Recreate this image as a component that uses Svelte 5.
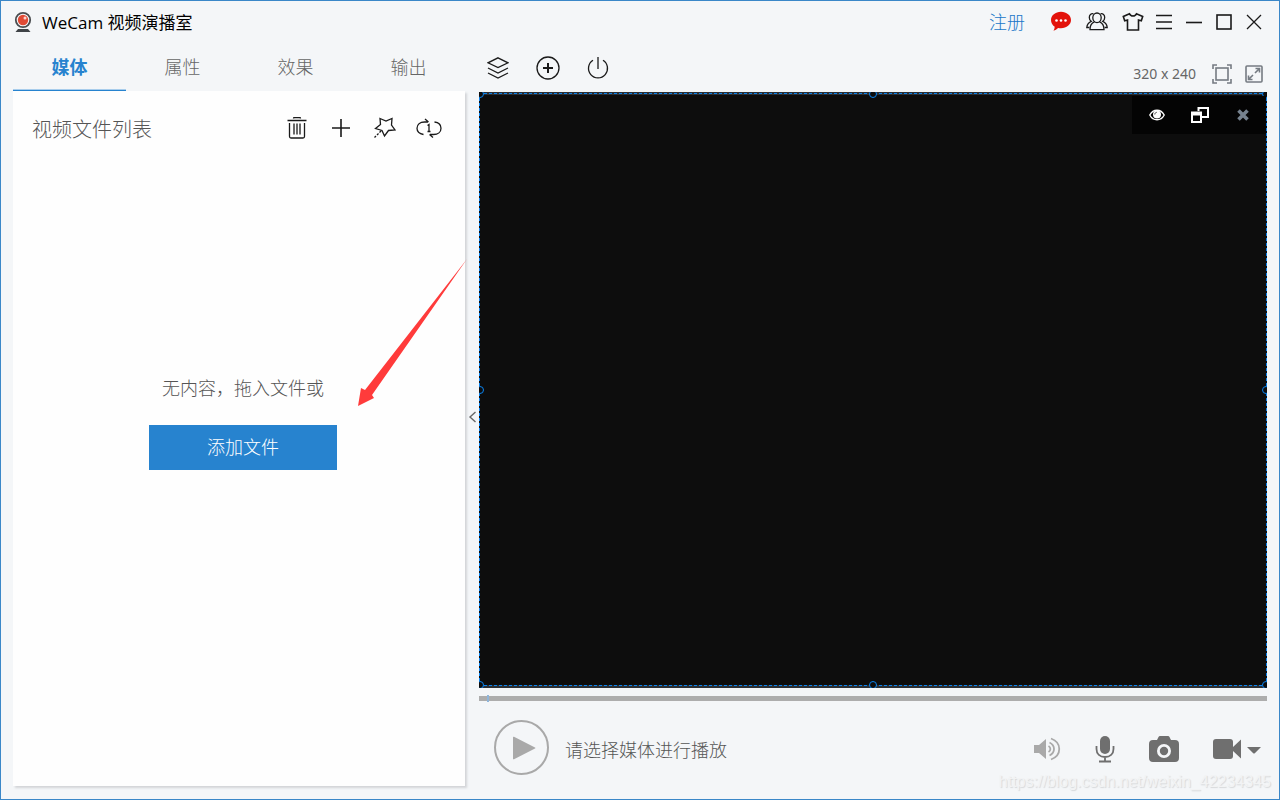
<script>
  let tabs = ['媒体', '属性', '效果', '输出'];
  let current = '媒体';
  let position = 0;

  // grips on the edges of the selected source, in percent
  const grips = [
    [0, 0], [50, 0], [100, 0],
    [0, 50], [100, 50],
    [0, 100], [50, 100], [100, 100]
  ];
</script>

<svelte:head>
  <title>WeCam 视频演播室</title>
</svelte:head>

<div class="window">
  <header>
    <svg class="logo" width="18" height="22" viewBox="0 0 18 22">
      <path d="M4 18h10l2.500 3h-15z" fill="#3f4347" />
      <circle cx="9" cy="9" r="7.200" fill="#f4f6f8" stroke="#4a4d50" stroke-width="1.800" />
      <circle cx="9" cy="9" r="5.200" fill="#e04a35" />
      <circle cx="11" cy="7" r="1.500" fill="#fbd5cf" />
    </svg>
    <h1>WeCam 视频演播室</h1>
    <a class="register" href="#register">注册</a>

    <div class="account">
      <button aria-label="消息">
        <svg width="22" height="22" viewBox="0 0 22 22">
          <path d="M11 .8c5.600 0 10 3.600 10 8.200s-4.400 8.200-10 8.200c-1 0-2-.1-2.900-.3-1.300 1.300-2.900 2.300-4.600 2.900.7-1.200 1.100-2.600 1.200-4.100C2.400 14.200 1 11.800 1 9c0-4.600 4.400-8.200 10-8.200z" fill="#e3120b" />
          <circle cx="6.500" cy="9.500" r="1.300" fill="#fff" />
          <circle cx="11" cy="9.500" r="1.300" fill="#fff" />
          <circle cx="15.500" cy="9.500" r="1.300" fill="#fff" />
        </svg>
      </button>
      <button aria-label="用户">
        <svg width="22" height="20" viewBox="0 0 22 20" class="line">
          <ellipse cx="11" cy="5.800" rx="4.200" ry="4.800" />
          <path d="M8.500 9.800c-2.900 1.100-4.500 3.800-4.500 7.800h14c0-4-1.600-6.700-4.500-7.800" />
          <path d="M7.500 1.800C5 1.300 3.300 3 3.300 5.500c0 1.700.7 3 1.900 3.800C2.600 10.400 1 12.600.8 15.500h2.500M14.500 1.800c2.500-.5 4.200 1.200 4.200 3.700 0 1.700-.7 3-1.900 3.800 2.600 1.100 4.200 3.300 4.400 6.200h-2.500" />
        </svg>
      </button>
      <button aria-label="皮肤">
        <svg width="22" height="20" viewBox="0 0 22 20" class="line bold">
          <path d="M7.500 1.700 1.300 4.500l1.400 4.200 2.800-.7v10h11V8l2.800.7 1.400-4.200-6.200-2.800c-.6 1.500-1.900 2.300-3.500 2.300s-2.900-.8-3.500-2.300z" />
        </svg>
      </button>
    </div>

    <div class="controls">
      <button aria-label="菜单">
        <svg width="16" height="16" viewBox="0 0 16 16" class="line bold">
          <path d="M0 1.500h16M0 8h16M0 14.500h16" />
        </svg>
      </button>
      <button aria-label="最小化">
        <svg width="16" height="16" viewBox="0 0 16 16" class="line bold"><path d="M0 8.500h16" /></svg>
      </button>
      <button aria-label="最大化">
        <svg width="16" height="16" viewBox="0 0 16 16" class="line bold"><rect x="1" y="1" width="14" height="14" /></svg>
      </button>
      <button aria-label="关闭">
        <svg width="16" height="16" viewBox="0 0 16 16" class="line"><path d="M1 1l14 14M15 1L1 15" /></svg>
      </button>
    </div>
  </header>

  <main>
    <section class="sidebar">
      <nav>
        {#each tabs as tab}
          <button class:active={tab === current} on:click={() => current = tab}>{tab}</button>
        {/each}
      </nav>

      <div class="panel">
        <div class="listhead">
          <h2>视频文件列表</h2>
          <button aria-label="删除">
            <svg width="20" height="22" viewBox="0 0 20 22" class="line">
              <path d="M.5 3.500h19M6.500 1.500c0-.6.300-1 1-1h5c.7 0 1 .4 1 1M2.500 6v13.500c0 1 .5 1.500 1.500 1.500h12c1 0 1.500-.5 1.500-1.500V6M7 6.500v11M10 6.500v11M13 6.500v11" />
            </svg>
          </button>
          <button aria-label="添加">
            <svg width="20" height="20" viewBox="0 0 20 20" class="line bold"><path d="M1 10h18M10 1v18" /></svg>
          </button>
          <button aria-label="特效">
            <svg width="22" height="22" viewBox="0 0 22 22" class="line">
              <path d="M6 1.500l6 2.500 6-2.500-.5 6.500 3.500 5-6.500.500-4 5.500-2.500-5.500-6.500-2 5-4zM7 14l-1.500 1.500M4.500 16.500L3 18M2 19l-1.500 1.500" />
            </svg>
          </button>
          <button aria-label="单个循环">
            <svg width="26" height="20" viewBox="0 0 26 20" class="line">
              <path d="M7.500 16.500C3.500 15.800 1 13.500 1 10.300c0-3.800 3-6.300 7.500-6.300H12M9 1l3.500 3M18.500 4c4 .5 6.500 2.900 6.500 6.200 0 3.800-3 6.300-7.500 6.300H14M17 19.500l-3.500-3M11.500 7.500l1.500-1v7M11.500 13.500h3" />
            </svg>
          </button>
        </div>

        <div class="empty">
          <p>无内容，拖入文件或</p>
          <button>添加文件</button>
        </div>

        <svg class="arrow" width="110" height="150" viewBox="0 0 110 150">
          <path d="M110 2L8 133l-4-2-3 18 16-8-2-3z" fill="#ff3b3b" />
        </svg>
      </div>
    </section>

    <button class="splitter" aria-label="收起">
      <svg width="8" height="12" viewBox="0 0 8 12"><path d="M7.500 1L2 6l5.500 5" fill="none" stroke="#666" stroke-width="1.400" /></svg>
    </button>

    <section class="stage">
      <div class="toolbar">
        <button aria-label="图层">
          <svg width="22" height="22" viewBox="0 0 22 22" class="line">
            <path d="M11 .8l10 5-10 4.700L1 5.800zM1 11l10 5 10-5M1 16l10 5 10-5" />
          </svg>
        </button>
        <button aria-label="添加来源">
          <svg width="24" height="24" viewBox="0 0 24 24" class="line">
            <circle cx="12" cy="12" r="11" /><path d="M7 12h10M12 7v10" stroke-width="2" />
          </svg>
        </button>
        <button aria-label="开关">
          <svg width="22" height="22" viewBox="0 0 22 22" class="line">
            <path d="M11 0v12M6 3.300a9.500 9.500 0 1 0 10 0" />
          </svg>
        </button>
        <span class="size">320 x 240</span>
        <button class="small" aria-label="适应窗口">
          <svg width="20" height="20" viewBox="0 0 20 20" class="gray">
            <path d="M1 5V1h4M15 1h4v4M19 15v4h-4M5 19H1v-4" /><rect x="4" y="4" width="12" height="12" />
          </svg>
        </button>
        <button class="small" aria-label="全屏">
          <svg width="18" height="18" viewBox="0 0 18 18" class="gray">
            <rect x="1" y="1" width="16" height="16" rx="1" />
            <path d="M10.500 3.500h4v4M14.500 3.500L10 8M3.500 10.500v4h4M3.500 14.500L8 10" />
          </svg>
        </button>
      </div>

      <div class="video">
        <div class="selection">
          {#each grips as [x, y]}
            <i style="left: {x}%; top: {y}%"></i>
          {/each}
        </div>
        <div class="source">
          <button aria-label="显示">
            <svg width="16" height="12" viewBox="0 0 16 12">
              <path d="M.8 6C2.500 2.700 5 1.200 8 1.200S13.500 2.700 15.200 6C13.500 9.300 11 10.800 8 10.800S2.500 9.300.8 6z" fill="none" stroke="#fff" stroke-width="1.400" />
              <circle cx="8" cy="5.500" r="4" fill="#fff" />
              <path d="M5.800 5.500c0-1.300.8-2.100 2-2.200" fill="none" stroke="#222" stroke-width=".8" />
            </svg>
          </button>
          <button aria-label="层次">
            <svg width="20" height="18" viewBox="0 0 20 18" fill="none" stroke="#fff" stroke-width="2">
              <path d="M8.500 5V2H18v9h-6" /><path d="M2 7h9v9H2z" /><path d="M1 7.500h11" stroke-width="4" />
            </svg>
          </button>
          <button aria-label="移除">
            <svg width="12" height="12" viewBox="0 0 12 12"><path d="M1.500 1.500l9 9M10.500 1.500l-9 9" stroke="#76828f" stroke-width="3.600" /></svg>
          </button>
        </div>
      </div>

      <input class="seek" type="range" min="0" max="100" bind:value={position} aria-label="进度">

      <div class="player">
        <button class="play" aria-label="播放">
          <svg width="24" height="24" viewBox="0 0 24 24"><path d="M1 1.500v21q0 1.200 1 .7L23 12.500q1-.5 0-1L2 .8q-1-.5-1 .7z" fill="#a9a9a9" /></svg>
        </button>
        <p>请选择媒体进行播放</p>
        <button aria-label="音量">
          <svg width="28" height="24" viewBox="0 0 28 24">
            <path d="M1 8h5l7-6v20l-7-6H1z" fill="#a9a9a9" />
            <path d="M15.500 9c2.500 1.500 2.500 4.500 0 6M16.500 5.500c6 3 6 10 0 13M18 1.500c11 4 11 17 0 21" fill="none" stroke="#a9a9a9" stroke-width="1.800" />
          </svg>
        </button>
        <button aria-label="麦克风">
          <svg width="20" height="28" viewBox="0 0 20 28">
            <rect x="5" y="1" width="10" height="18" rx="5" fill="#6f6f6f" />
            <path d="M1.500 11v3c0 5 3.500 8 8.500 8s8.500-3 8.500-8v-3M10 22v4M4 26.500h12" fill="none" stroke="#6f6f6f" stroke-width="1.800" />
          </svg>
        </button>
        <button aria-label="拍照">
          <svg width="30" height="26" viewBox="0 0 30 26">
            <path d="M4 4h4l1.500-3q.5-1 1.500-1h8q1 0 1.500 1L22 4h4q4 0 4 4v14q0 4-4 4H4q-4 0-4-4V8q0-4 4-4z" fill="#6f6f6f" />
            <circle cx="15" cy="15" r="5.600" fill="#6f6f6f" stroke="#f4f6f8" stroke-width="2.800" />
          </svg>
        </button>
        <button class="record" aria-label="录像">
          <svg width="48" height="20" viewBox="0 0 48 20" fill="#6f6f6f">
            <rect width="20" height="20" rx="3" />
            <path d="M20 8l8-7.500v19L20 12zM34 8h14l-6 6q-1 1-2 0z" />
          </svg>
        </button>
      </div>
    </section>
  </main>

  <span class="watermark">https://blog.csdn.net/weixin_42234345</span>
</div>

<style>
  :global(body) {
    background: #f4f6f8;
    font-family: "Noto Sans", "Noto Sans CJK SC", sans-serif;
    font-weight: 300;
  }

  .window {
    position: relative;
    display: flex;
    flex-direction: column;
    box-sizing: border-box;
    min-height: 100vh;
    border: 1px solid #3a87c8;
    color: #555;
  }

  h1, h2, p {
    margin: 0;
    font-weight: 300;
  }

  button {
    display: flex;
    align-items: center;
    justify-content: center;
    padding: 0;
    border: 0;
    background: none;
    color: inherit;
    font: inherit;
    cursor: pointer;
  }

  svg {
    flex: none;
  }

  .line {
    fill: none;
    stroke: #1a1a1a;
    stroke-width: 1.3;
  }

  .bold {
    stroke-width: 1.6;
  }

  .gray {
    fill: none;
    stroke: #757b82;
    stroke-width: 1.6;
  }

  header {
    display: flex;
    align-items: center;
    height: 42px;
    padding: 0 10px 0 13px;
  }

  h1 {
    flex: 1;
    margin-left: 10px;
    padding-bottom: 2px;
    color: #000;
    font-family: "Open Sans", "Noto Sans CJK SC", sans-serif;
    font-size: 17px;
    font-weight: 400;
  }

  .register {
    margin-right: 20px;
    padding-bottom: 2px;
    color: #1976c8;
    font-size: 18px;
    text-decoration: none;
  }

  .account {
    display: flex;
    gap: 4px;
  }

  .account button {
    width: 32px;
    height: 32px;
  }

  .controls {
    display: flex;
  }

  .controls button {
    width: 30px;
    height: 32px;
  }

  main {
    flex: 1;
    display: grid;
    grid-template-columns: 452fr 14px 788fr;
    padding: 0 12px;
  }

  .sidebar {
    display: flex;
    flex-direction: column;
    margin-bottom: 13px;
  }

  nav {
    display: flex;
    height: 48px;
  }

  nav button {
    flex: 1;
    padding-bottom: 2px;
    border-bottom: 1px solid transparent;
    color: #666;
    font-size: 18px;
  }

  nav .active {
    border-color: #2783cf;
    box-shadow: inset 0 -1px #a8cdec;
    color: #2783cf;
    font-weight: 700;
  }

  .panel {
    position: relative;
    flex: 1;
    display: flex;
    flex-direction: column;
    background: #fefefe;
    box-shadow: 2px 2px 2px #d3d5d8;
  }

  .listhead {
    display: flex;
    align-items: center;
    height: 74px;
    padding: 0 14px 0 19px;
  }

  h2 {
    flex: 1;
    font-size: 20px;
  }

  .listhead button {
    width: 44px;
    height: 44px;
  }

  .empty {
    flex: 1;
    display: flex;
    flex-direction: column;
    align-items: center;
    justify-content: center;
    gap: 23px;
    padding: 0 0 108px 8px;
    font-size: 18px;
    line-height: 28px;
  }

  .empty button {
    width: 188px;
    height: 45px;
    background: #2783cf;
    color: #fff;
  }

  .arrow {
    position: absolute;
    top: 166px;
    right: -2px;
    pointer-events: none;
  }

  .splitter {
    margin-bottom: 8px;
  }

  .stage {
    display: flex;
    flex-direction: column;
  }

  .toolbar {
    display: flex;
    align-items: center;
    gap: 12px;
    height: 49px;
  }

  .toolbar button {
    width: 38px;
    height: 38px;
  }

  .toolbar .small {
    align-self: flex-end;
    width: 20px;
    height: 36px;
  }

  .toolbar .small:last-child {
    margin-right: 3px;
  }

  .size {
    align-self: flex-end;
    margin: 0 4px 0 auto;
    color: #666;
    font-size: 14px;
    font-weight: 400;
    line-height: 36px;
  }

  .video {
    position: relative;
    flex: 1;
    overflow: hidden;
    background: #0d0d0d;
    box-shadow: inset 0 3px #2b2f34, inset 0 -3px #2b2f34;
  }

  .selection {
    position: absolute;
    inset: 1px 0 2px;
    border: 1px dashed #0a84f0;
  }

  .selection i {
    position: absolute;
    width: 6px;
    height: 6px;
    border: 1px solid #0a84f0;
    border-radius: 50%;
    background: #0d0d0d;
    transform: translate(-50%, -50%);
  }

  .source {
    position: absolute;
    top: 4px;
    right: 1px;
    display: flex;
    padding: 0 2px 0 3px;
    background: #040404;
  }

  .source button {
    width: 43px;
    height: 38px;
  }

  .seek {
    appearance: none;
    width: 100%;
    height: 5px;
    margin: 8px 0 0;
    padding: 0 8px;
    box-sizing: border-box;
    background: #adadad;
  }

  .seek::-webkit-slider-thumb {
    appearance: none;
    width: 2px;
    height: 7px;
    background: #8fb5da;
  }

  .player {
    display: flex;
    align-items: center;
    gap: 34px;
    height: 98px;
    padding: 0 6px 3px 15px;
    box-sizing: border-box;
  }

  .player p {
    flex: 1;
    margin-left: -18px;
    font-size: 18px;
  }

  .play {
    width: 55px;
    height: 55px;
    margin-bottom: 2px;
    padding-left: 4px;
    border: 2px solid #a9a9a9;
    border-radius: 50%;
  }

  .watermark {
    position: absolute;
    right: 8px;
    bottom: 8px;
    color: #f2f3f4;
    font: 16px "Liberation Sans", sans-serif;
    text-shadow: 1px 1px 1px #d6d8da;
  }
</style>
